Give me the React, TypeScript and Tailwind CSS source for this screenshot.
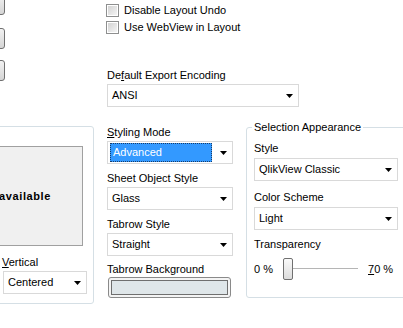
import React from "react";

const font = { fontFamily: '"Liberation Sans", Arial, sans-serif' };

function Arrow() {
  return (
    <svg width="7" height="4" viewBox="0 0 7 4" className="shrink-0">
      <path d="M0 0H7L3.5 4Z" fill="#000" />
    </svg>
  );
}

function Combo({ value, w, selected = false }: { value: string; w: string; selected?: boolean }) {
  return (
    <div className={`${w} h-[23px] border border-[#d9d9d9] bg-white flex items-center justify-between pr-[5px]`}>
      {selected ? (
        <div className="ml-[2px] h-[19px] w-[102px] bg-[#3399ff] border border-dotted border-[#1a3c66] text-white flex items-center pl-[2px]">
          {value}
        </div>
      ) : (
        <span className="pl-[4px]">{value}</span>
      )}
      <Arrow />
    </div>
  );
}

function Check({ label }: { label: string }) {
  return (
    <div className="flex items-center h-[13px] gap-[5px]">
      <div className="w-[13px] h-[13px] border border-[#8e8f8f] bg-white p-[1px]">
        <div className="w-full h-full bg-gradient-to-br from-[#d3d3d3] to-[#f4f4f4]" />
      </div>
      <span>{label}</span>
    </div>
  );
}

function StubButton({ cls }: { cls: string }) {
  return (
    <div className={`${cls} ml-[-30px] w-[35px] h-[21px] rounded-[3px] border border-[#707070] bg-gradient-to-b from-[#f2f2f2] to-[#d5d5d5]`} />
  );
}

export default function App() {
  return (
    <div className="w-[403px] h-[328px] overflow-hidden bg-white text-[11px] leading-[13px] text-black" style={font}>
      {/* Top section */}
      <div className="h-[120px] flex">
        <div className="w-[106px] flex flex-col">
          <StubButton cls="mt-[-6px]" />
          <StubButton cls="mt-[13px]" />
          <StubButton cls="mt-[11px]" />
        </div>
        <div className="flex flex-col pt-[4px]">
          <div className="flex flex-col gap-[4px]">
            <Check label="Disable Layout Undo" />
            <Check label="Use WebView in Layout" />
          </div>
          <div className="mt-[35px] pl-[1px]">
            De<span className="underline">f</span>ault Export Encoding
          </div>
          <div className="mt-[2px] ml-[1px]">
            <Combo value="ANSI" w="w-[192px]" />
          </div>
        </div>
      </div>

      {/* Bottom section */}
      <div className="flex items-start">
        {/* Left group */}
        <div className="mt-[6px] ml-[-140px] w-[234px] h-[178px] shrink-0 border border-[#d5dfe5] rounded-[3px] flex flex-col items-end">
          <div className="mt-[19px] mr-[10px] w-[220px] h-[100px] bg-[#f0f0f0] border border-[#a0a0a0] flex items-center justify-end pr-[31px] font-bold whitespace-nowrap">
            <span>Preview not</span>
            <span className="ml-[6px] tracking-[0.6px]">available</span>
          </div>
          <div className="self-start ml-[141px] mt-[10px]">
            <span className="underline">V</span>ertical
          </div>
          <div className="self-start ml-[142px] mt-[2px]">
            <Combo value="Centered" w="w-[84px]" />
          </div>
        </div>

        {/* Middle column */}
        <div className="ml-[13px] mt-[6px] w-[126px] shrink-0 flex flex-col">
          <div><span className="underline">S</span>tyling Mode</div>
          <div className="mt-[2px]">
            <Combo value="Advanced" w="w-[126px]" selected />
          </div>
          <div className="mt-[8px]">Sheet Object Style</div>
          <div className="mt-[2px]">
            <Combo value="Glass" w="w-[126px]" />
          </div>
          <div className="mt-[8px]">Tabrow Style</div>
          <div className="mt-[2px]">
            <Combo value="Straight" w="w-[126px]" />
          </div>
          <div className="mt-[7px]">Tabrow Background</div>
          <div className="mt-[1px] ml-[1px] w-[123px] h-[21px] rounded-[3px] border border-[#8a8a8a] bg-[#f4f4f4] p-[2px]">
            <div className="w-full h-full border border-[#6f6f6f] bg-[#dfe6e9]" />
          </div>
        </div>

        {/* Right group */}
        <div className="ml-[13px] mt-[7px] w-[170px] h-[171px] shrink-0 border border-[#d5dfe5] rounded-[3px] relative pl-[7px]">
          <div className="absolute top-[-7px] left-[5px] bg-white px-[2px]">Selection Appearance</div>
          <div className="mt-[14px]">Style</div>
          <div className="mt-[3px]">
            <Combo value="QlikView Classic" w="w-[144px]" />
          </div>
          <div className="mt-[10px]">Color Scheme</div>
          <div className="mt-[3px]">
            <Combo value="Light" w="w-[144px]" />
          </div>
          <div className="mt-[8px]">Transparency</div>
          <div className="mt-[7px] flex items-center h-[22px] w-[144px]">
            <span className="w-[29px]">0 %</span>
            <div className="w-[10px] h-[22px] rounded-[2px] border border-[#707070] bg-gradient-to-b from-[#fafafa] to-[#dcdcdc]" />
            <div className="w-[65px] h-[2px] border-t border-[#b5b5b5] border-b border-b-white bg-[#e5e5e5]" />
            <span className="ml-[10px]"><span className="underline">7</span>0 %</span>
          </div>
        </div>
      </div>
    </div>
  );
}
